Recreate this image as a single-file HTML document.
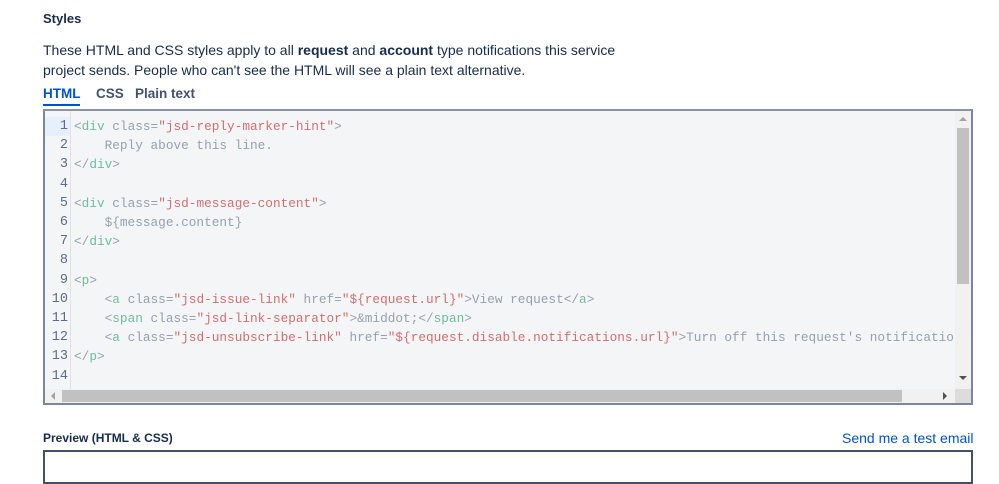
<!DOCTYPE html>
<html><head><style>
body{margin:0;width:999px;height:458px;background:#fff;font-family:"Liberation Sans",sans-serif;color:#172b4d;position:relative;overflow:hidden}
.a{position:absolute;white-space:nowrap}
.ed{position:absolute;left:43px;top:109px;width:926px;height:292px;border:2px solid #7a869a;border-top-color:#8993a4;background:#f4f5f7;overflow:hidden}
.gut{position:absolute;left:0;top:0;width:25px;height:278px;border-right:1px solid #dfe1e6;background:#f4f5f7}
.ln{position:absolute;right:2px;font:13.5px/19.2px "Liberation Mono",monospace;color:#5e6c84;text-align:right}
pre{position:absolute;left:29px;top:6px;margin:0;font:12.75px/19.2px "Liberation Mono",monospace;color:#97a0af;width:880px;overflow:hidden}
.t{color:#6fbd9a}.s{color:#d36e6e}.x{color:#97a0af}
</style></head><body>
<div class="a" style="left:43px;top:11px;font-size:13px;font-weight:bold">Styles</div>
<div class="a" style="left:43px;top:40px;font-size:14px;line-height:20px">These HTML and CSS styles apply to all <b>request</b> and <b>account</b> type notifications this service<br>project sends. People who can't see the HTML will see a plain text alternative.</div>
<div class="a" style="left:43px;top:86px;font-size:13.5px;font-weight:bold;color:#0052cc">HTML</div>
<div class="a" style="left:96px;top:86px;font-size:13.5px;font-weight:bold;color:#42526e">CSS</div>
<div class="a" style="left:135px;top:86px;font-size:13.5px;font-weight:bold;color:#42526e">Plain text</div>
<div class="a" style="left:43px;top:104px;width:37px;height:2px;background:#0052cc"></div>
<div class="ed">
<div class="gut"><div style="position:absolute;left:0;top:6px;width:25px;height:19px;background:#e6effc"></div>
<div class="ln" style="top:6px">1<br>2<br>3<br>4<br>5<br>6<br>7<br>8<br>9<br>10<br>11<br>12<br>13<br>14</div></div>
<pre><span class="x">&lt;</span><span class="t">div</span> class=<span class="s">"jsd-reply-marker-hint"</span>&gt;
    Reply above this line.
&lt;/<span class="t">div</span>&gt;

&lt;<span class="t">div</span> class=<span class="s">"jsd-message-content"</span>&gt;
    ${message.content}
&lt;/<span class="t">div</span>&gt;

&lt;<span class="t">p</span>&gt;
    &lt;<span class="t">a</span> class=<span class="s">"jsd-issue-link"</span> href=<span class="s">"${request.url}"</span>&gt;View request&lt;/<span class="t">a</span>&gt;
    &lt;<span class="t">span</span> class=<span class="s">"jsd-link-separator"</span>&gt;&amp;middot;&lt;/<span class="t">span</span>&gt;
    &lt;<span class="t">a</span> class=<span class="s">"jsd-unsubscribe-link"</span> href=<span class="s">"${request.disable.notifications.url}"</span>&gt;Turn off this request's notifications&lt;/<span class="t">a</span>&gt;
&lt;/<span class="t">p</span>&gt;
</pre>
<div style="position:absolute;left:910px;top:0;width:16px;height:278px;background:#f1f1f1"></div>
<div style="position:absolute;left:912px;top:17px;width:12px;height:156px;background:#c1c1c1"></div>
<div style="position:absolute;left:914px;top:6px;border:4px solid transparent;border-bottom-color:#a3a3a3;border-top:0;width:0"></div>
<div style="position:absolute;left:914px;top:265px;border:4px solid transparent;border-top-color:#505050;border-bottom:0;width:0"></div>
<div style="position:absolute;left:0;top:278px;width:910px;height:14px;background:#f1f1f1"></div>
<div style="position:absolute;left:17px;top:279px;width:840px;height:12px;background:#c1c1c1"></div>
<div style="position:absolute;left:6px;top:281px;border:4px solid transparent;border-right-color:#a3a3a3;border-left:0;height:0"></div>
<div style="position:absolute;left:898px;top:281px;border:4px solid transparent;border-left-color:#505050;border-right:0;height:0"></div>
<div style="position:absolute;left:910px;top:278px;width:16px;height:14px;background:#dcdcdc"></div>
</div>
<div class="a" style="left:43px;top:431px;font-size:12px;font-weight:bold">Preview (HTML &amp; CSS)</div>
<div class="a" style="left:842px;top:430px;font-size:14px;color:#0052cc">Send me a test email</div>
<div class="a" style="left:43px;top:450px;width:926px;height:30px;border:2px solid #42526e"></div>
</body></html>
